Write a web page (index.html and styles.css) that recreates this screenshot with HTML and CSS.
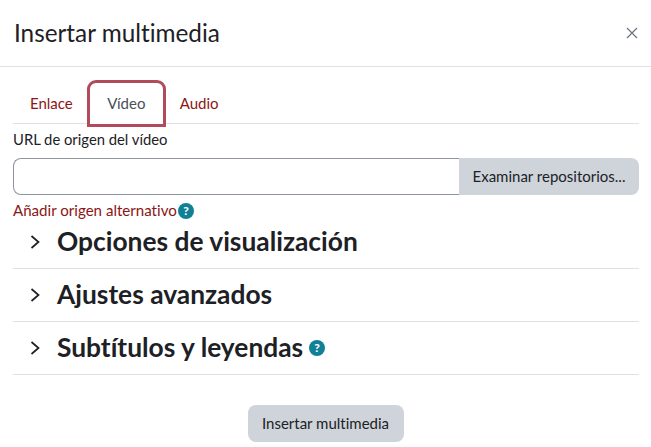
FILE: index.html
```
<!DOCTYPE html>
<html lang="es">
<head>
<meta charset="utf-8">
<title>Insertar multimedia</title>
<link rel="stylesheet" href="styles.css">
</head>
<body>
<div class="modal">
  <header class="header">
    <h1 class="title">Insertar multimedia</h1>
    <button class="close" aria-label="Cerrar"><svg width="12" height="12" viewBox="0 0 12 12"><path d="M1 1l10 10M11 1L1 11" stroke="#6a737b" stroke-width="1.2" fill="none"/></svg></button>
  </header>
  <div class="body">
    <nav class="tabs">
      <a class="tab">Enlace</a>
      <a class="tab active">Vídeo</a>
      <a class="tab">Audio</a>
    </nav>
    <label class="label">URL de origen del vídeo</label>
    <div class="group">
      <input class="input" type="text">
      <button class="browse">Examinar repositorios...</button>
    </div>
    <div class="add"><a class="link">Añadir origen alternativo</a><svg class="help" width="16" height="16" viewBox="0 0 16 16"><circle cx="8" cy="8" r="8" fill="#0f8096"/><text x="8" y="12" class="q">?</text></svg></div>
    <section class="acc first">
      <svg class="chev" width="10" height="14" viewBox="0 0 10 14"><path d="M1.5 1L8.500 7l-7 6" stroke="#1d2125" stroke-width="1.700" fill="none"/></svg>
      <h2 class="acc-title">Opciones de visualización</h2>
    </section>
    <section class="acc">
      <svg class="chev" width="10" height="14" viewBox="0 0 10 14"><path d="M1.5 1L8.500 7l-7 6" stroke="#1d2125" stroke-width="1.700" fill="none"/></svg>
      <h2 class="acc-title">Ajustes avanzados</h2>
    </section>
    <section class="acc">
      <svg class="chev" width="10" height="14" viewBox="0 0 10 14"><path d="M1.5 1L8.500 7l-7 6" stroke="#1d2125" stroke-width="1.700" fill="none"/></svg>
      <h2 class="acc-title">Subtítulos y leyendas</h2>
      <svg class="help big" width="16" height="16" viewBox="0 0 16 16"><circle cx="8" cy="8" r="8" fill="#0f8096"/><text x="8" y="12" class="q">?</text></svg>
    </section>
    <div class="footer"><button class="submit">Insertar multimedia</button></div>
  </div>
</div>
</body>
</html>
```
FILE: styles.css
```
* { box-sizing: border-box; }
html, body { margin: 0; padding: 0; }
body { width: 651px; height: 447px; overflow: hidden; background: #fff; font-family: Lato, "Liberation Sans", sans-serif; font-size: 15px; color: #1d2125; font-variant-ligatures: none; }
.header { height: 67px; display: flex; align-items: center; justify-content: space-between; padding: 0 13px 1px 14px; border-bottom: 1px solid #dee2e6; }
.title { margin: 0; font-size: 24.300px; font-weight: 400; line-height: 28px; }
.close { border: 0; background: none; padding: 0; width: 12px; height: 12px; display: flex; }
.body { padding: 0 12px 0 13px; }
.tabs { display: flex; height: 57px; padding: 13px 0 0 0; border-bottom: 1px solid #dee2e6; }
.tab { display: flex; align-items: center; justify-content: center; height: 46px; padding: 0 17px; color: #8c1515; }
.tab.active { width: 79px; padding: 0 0 1px; margin-left: -3px; margin-right: -3px; height: 47px; color: #495057; border: 3px solid #b14a5a; border-radius: 9px 9px 0 0; background: #fff; position: relative; }
.label { display: block; height: 34px; padding-top: 5px; line-height: 21px; font-size: 14.800px; }
.group { display: flex; height: 37px; }
.input { flex: 1; min-width: 0; height: 37px; border: 1px solid #8f959e; border-right: 0; border-radius: 8px 0 0 8px; background: #fff; padding: 0; outline: 0; }
.browse { width: 180px; height: 37px; border: 0; border-radius: 0 8px 8px 0; background: #ced4da; color: #1d2125; font: inherit; padding: 0 0 1px; }
.add { display: flex; align-items: center; height: 26px; padding-top: 5px; }
.link { color: #8c1515; line-height: 21px; font-size: 15.100px; }
.help { flex: none; margin-left: 1px; }
.q { fill: #fff; font: 900 12px Lato, sans-serif; text-anchor: middle; }
.acc { display: flex; align-items: center; height: 53px; border-bottom: 1px solid #dee2e6; padding-left: 17px; }
.acc.first { height: 48px; padding-bottom: 5px; }
.chev { flex: none; margin-right: 17px; }
.acc-title { margin: 0 0 2px; font-size: 26.350px; font-weight: 700; line-height: 30px; }
.help.big { margin-left: 6px; }
.footer { display: flex; justify-content: center; padding-top: 30px; }
.submit { width: 156px; height: 37px; border: 0; border-radius: 8px; background: #ced4da; color: #1d2125; font: inherit; padding: 0 1px 1px 0; }
```
